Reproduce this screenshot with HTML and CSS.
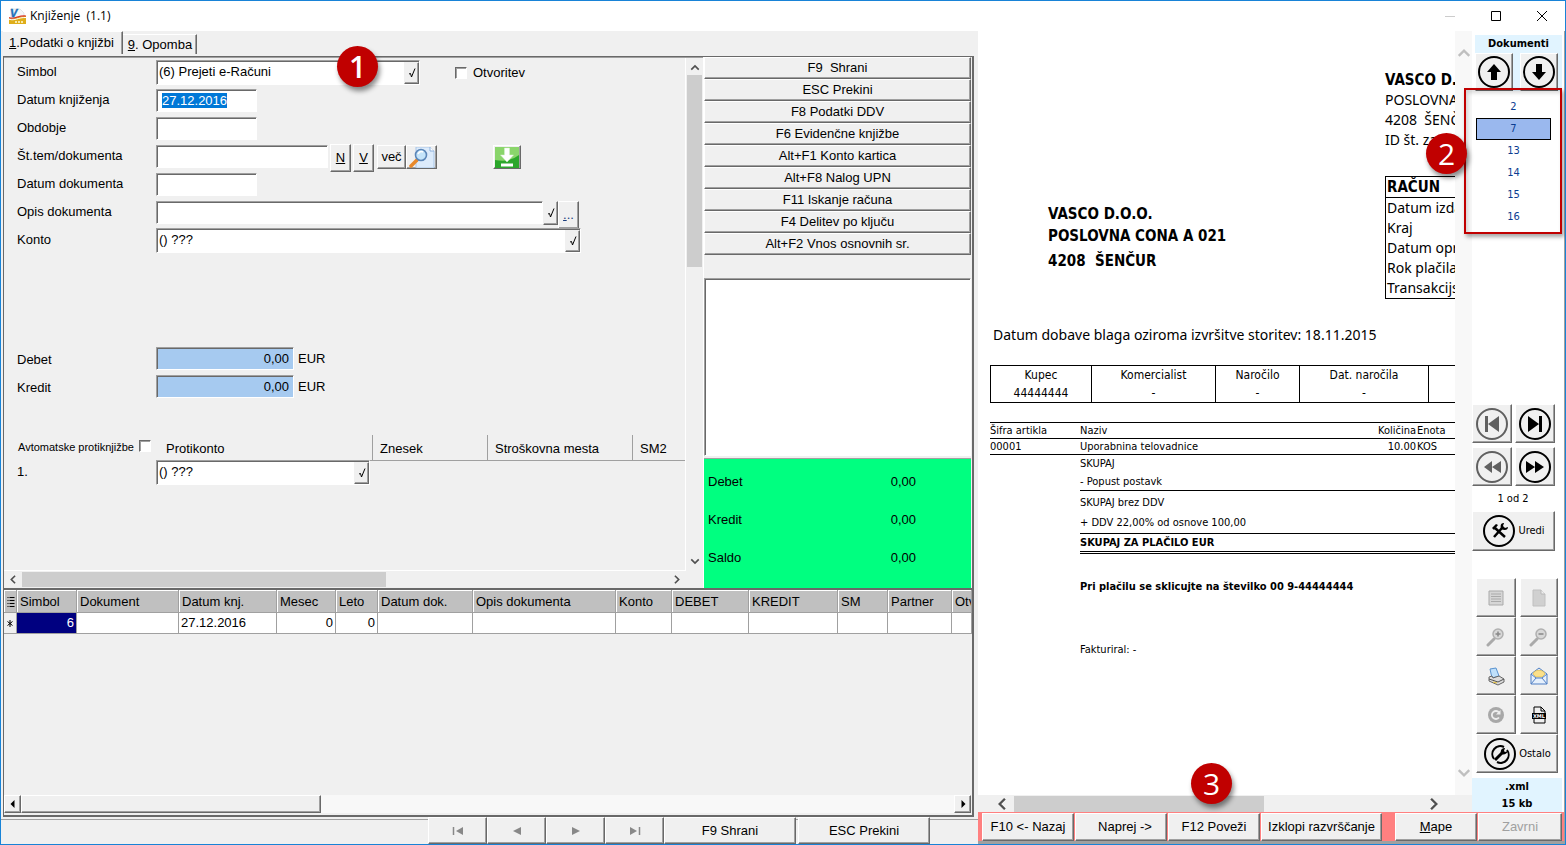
FILE: index.html
```html
<!DOCTYPE html>
<html lang="sl">
<head>
<meta charset="utf-8">
<title>Knjiženje (1.1)</title>
<link rel="stylesheet" href="styles.css">
</head>
<body>
<svg class="defs" aria-hidden="true">
  <symbol id="tick" viewBox="0 0 10 12"><path d="M2 7l1.500-.5 1 3.500L8 1.500" fill="none" stroke="#000"/></symbol>
  <symbol id="chev" viewBox="0 0 12 8"><path d="M1.500 6.500L6 2l4.500 4.500" fill="none" stroke="currentColor" stroke-width="2"/></symbol>
  <symbol id="glass" viewBox="0 0 20 20"><path d="M2 18l6-6" stroke="#aaa" stroke-width="3" stroke-linecap="round"/><circle cx="12" cy="7" r="5" fill="#d8d8d8" stroke="#b0b0b0" stroke-width="1.500"/></symbol>
</svg>
<div class="window">
  <header class="titlebar">
    <svg class="app-icon" viewBox="0 0 17 17"><path d="M2 1h9l4 4v9H2z" fill="#f4f6f8" stroke="#cfd6dc" stroke-width=".6"/><path d="M0 10c5 2 8-2 17-2v8H0z" fill="#dfae1a"/><path d="M0 9.500c6 2.500 9-2.500 17-1.500" fill="none" stroke="#d9352b" stroke-width="1.200"/><path d="M0 11.200c6 2 9-2 17-1.700" fill="none" stroke="#fff" stroke-width="1"/><path d="M6 14h9" stroke="#f8e9a8" stroke-width="2" stroke-dasharray="2 1"/><text x="1" y="9" class="logo-v">V</text></svg>
    <h1>Knjiženje&nbsp; (1.1)</h1>
    <div class="win-buttons">
      <button type="button" aria-label="Minimiraj" disabled><svg viewBox="0 0 12 12"><path d="M1 6.500h10" stroke="#ccc"/></svg></button>
      <button type="button" aria-label="Povečaj"><svg viewBox="0 0 12 12"><path d="M1.500 1.500h9v9h-9z" fill="none" stroke="#000"/></svg></button>
      <button type="button" aria-label="Zapri"><svg viewBox="0 0 12 12"><path d="M1 1l10 10M11 1L1 11" fill="none" stroke="#000"/></svg></button>
    </div>
  </header>
  <div class="body">
    <main class="ledger">
      <nav class="tabs">
        <button type="button" class="tab active"><u>1</u>.Podatki o knjižbi</button>
        <button type="button" class="tab"><u>9</u>. Opomba</button>
      </nav>
      <section class="panel">
        <div class="upper">
          <div class="form-view">
            <form class="form">
              <div class="row"><label for="simbol">Simbol</label><span class="combo c-simbol"><input id="simbol" value="(6) Prejeti e-Računi"><button type="button" class="pick" aria-label="Izberi simbol"><svg><use href="#tick"/></svg></button></span><label class="check"><input type="checkbox">Otvoritev</label></div>
              <div class="row"><label for="dknj">Datum knjiženja</label><input id="dknj" class="field short" value="27.12.2016"></div>
              <div class="row"><label for="obd">Obdobje</label><input id="obd" class="field short"></div>
              <div class="row"><label for="stdok">Št.tem/dokumenta</label><input id="stdok" class="field medium">
                <div class="tools"><button type="button" class="btn tall"><u>N</u></button><button type="button" class="btn tall"><u>V</u></button>
                <div class="pair"><button type="button" class="btn more">več</button><button type="button" class="btn look" aria-label="Poišči"><svg viewBox="0 0 28 21"><path d="M8 0h14l4 4v17H8z" fill="#dcebfb" stroke="#a9c6e8"/><path d="M22 0v4h4" fill="#fff" stroke="#8cb0dc"/><path d="M3 19l6-6" stroke="#e8892b" stroke-width="3.500" stroke-linecap="round"/><circle cx="13" cy="8" r="5.500" fill="#c4e4fa" stroke="#5b86b8" stroke-width="1.600"/><path d="M10 7c1-2 3-3 5-2" fill="none" stroke="#fff" stroke-width="1.500"/></svg></button></div></div>
                <button type="button" class="btn import" aria-label="Uvozi"><svg viewBox="0 0 24 21"><rect width="24" height="21" fill="#2ca72c"/><path d="M0 0h24v8Q14 16 0 13z" fill="#8ad56b"/><path d="M9.500 1h5v7h4L12 15 5.500 8h4z" fill="#fff" stroke="#d9f2d2" stroke-width=".5"/><path d="M6 16.500h12v3H6z" fill="#fff"/></svg></button></div>
              <div class="row"><label for="ddok">Datum dokumenta</label><input id="ddok" class="field short"></div>
              <div class="row"><label for="opis">Opis dokumenta</label><input id="opis" class="field long"><button type="button" class="pick outside" aria-label="Izberi opis"><svg><use href="#tick"/></svg></button><button type="button" class="btn dots"><u>.</u>..</button></div>
              <div class="row"><label for="konto">Konto</label><span class="combo c-konto"><input id="konto" value="() ???"><button type="button" class="pick" aria-label="Izberi konto"><svg><use href="#tick"/></svg></button></span></div>
              <div class="sums">
                <div class="row"><label for="debet">Debet</label><input id="debet" class="field amount" value="0,00"><span class="unit">EUR</span></div>
                <div class="row"><label for="kredit">Kredit</label><input id="kredit" class="field amount" value="0,00"><span class="unit">EUR</span></div>
              </div>
              <div class="contra">
                <label class="auto">Avtomatske protiknjižbe<input type="checkbox"></label>
                <div class="contra-head"><span>Protikonto</span><span>Znesek</span><span>Stroškovna mesta</span><span>SM2</span></div>
              </div>
              <div class="row"><label for="pk1">1.</label><span class="combo c-contra"><input id="pk1" value="() ???"><button type="button" class="pick" aria-label="Izberi protikonto"><svg><use href="#tick"/></svg></button></span></div>
            </form>
            <div class="vscroll"><svg><use href="#chev"/></svg><i></i><svg class="down"><use href="#chev"/></svg></div>
            <div class="hscroll"><svg class="left"><use href="#chev"/></svg><i></i><svg class="right"><use href="#chev"/></svg></div>
          </div>
          <aside class="actions">
            <div class="action-list">
              <button type="button" class="btn">F9&nbsp; Shrani</button>
              <button type="button" class="btn">ESC Prekini</button>
              <button type="button" class="btn">F8 Podatki DDV</button>
              <button type="button" class="btn">F6 Evidenčne knjižbe</button>
              <button type="button" class="btn">Alt+F1 Konto kartica</button>
              <button type="button" class="btn">Alt+F8 Nalog UPN</button>
              <button type="button" class="btn">F11 Iskanje računa</button>
              <button type="button" class="btn">F4 Delitev po ključu</button>
              <button type="button" class="btn">Alt+F2 Vnos osnovnih sr.</button>
            </div>
            <textarea class="memo" aria-label="Sporočila"></textarea>
            <dl class="balance">
              <div><dt>Debet</dt><dd>0,00</dd></div>
              <div><dt>Kredit</dt><dd>0,00</dd></div>
              <div><dt>Saldo</dt><dd>0,00</dd></div>
            </dl>
          </aside>
        </div>
        <div class="grid-view">
          <table class="entries">
            <colgroup><col class="w-ind"><col class="w-sim"><col class="w-dok"><col class="w-dat"><col class="w-mes"><col class="w-let"><col class="w-dd"><col class="w-opi"><col class="w-kon"><col class="w-deb"><col class="w-kre"><col class="w-sm"><col class="w-par"><col></colgroup>
            <thead><tr><th><svg class="ind" viewBox="0 0 7 11"><path d="M0 .5h1M2 .5h5M0 3.500h1M2 3.500h5M0 6.500h1M2 6.500h5M0 9.500h1M2 9.500h5" stroke="#000"/></svg></th><th>Simbol</th><th>Dokument</th><th>Datum knj.</th><th>Mesec</th><th>Leto</th><th>Datum dok.</th><th>Opis dokumenta</th><th>Konto</th><th>DEBET</th><th>KREDIT</th><th>SM</th><th>Partner</th><th>Otv</th></tr></thead>
            <tbody><tr><td class="mark"><svg class="ind" viewBox="0 0 7 11"><path d="M3.500 2v7M1 3.500l5 4M6 3.500l-5 4" stroke="#000"/></svg></td><td class="num sel">6</td><td></td><td>27.12.2016</td><td class="num">0</td><td class="num">0</td><td></td><td></td><td></td><td></td><td></td><td></td><td></td><td></td></tr></tbody>
          </table>
          <div class="classic-scroll"><button type="button" class="btn" aria-label="Levo"><svg viewBox="0 0 8 8"><path d="M5.500 0v8L1.500 4z"/></svg></button><i class="btn"></i><button type="button" class="btn end" aria-label="Desno"><svg viewBox="0 0 8 8"><path d="M2.500 0v8l4-4z"/></svg></button></div>
        </div>
      </section>
      <footer class="navbar">
        <button type="button" class="btn nav" aria-label="Prvi"><svg viewBox="0 0 12 10"><path d="M1.500 1v8" stroke="#888" stroke-width="1.500"/><path d="M11 1v8L4 5z" fill="#888"/></svg></button><button type="button" class="btn nav" aria-label="Prejšnji"><svg viewBox="0 0 12 10"><path d="M10 1v8L2 5z" fill="#888"/></svg></button><button type="button" class="btn nav" aria-label="Naslednji"><svg viewBox="0 0 12 10"><path d="M2 1v8l8-4z" fill="#888"/></svg></button><button type="button" class="btn nav" aria-label="Zadnji"><svg viewBox="0 0 12 10"><path d="M10.500 1v8" stroke="#888" stroke-width="1.500"/><path d="M1 1v8l7-4z" fill="#888"/></svg></button><button type="button" class="btn wide">F9 Shrani</button><button type="button" class="btn wide">ESC Prekini</button>
      </footer>
      <span class="badge one">1</span>
    </main>
    <section class="viewer">
      <div class="viewer-main">
        <div class="page">
          <article class="invoice">
            <div class="inv-head">
              <address class="recipient"><p>VASCO D.O.O.</p><p>POSLOVNA CONA A 021</p><p class="post">4208&nbsp; ŠENČUR</p></address>
              <div class="vendor">
                <p class="name">VASCO D.O.O.</p><p>POSLOVNA CONA A 021</p><p>4208&nbsp; ŠENČUR</p><p>ID št. za DDV:</p>
                <div class="facts"><h2>RAČUN</h2><p>Datum izdaje</p><p>Kraj</p><p>Datum opravljene st.</p><p>Rok plačila</p><p>Transakcijski račun</p></div>
              </div>
            </div>
            <p class="supply">Datum dobave blaga oziroma izvršitve storitev: 18.11.2015</p>
            <table class="order"><colgroup><col class="o1"><col class="o2"><col class="o3"><col class="o4"><col></colgroup>
              <tbody><tr><td>Kupec<br>44444444</td><td>Komercialist<br>-</td><td>Naročilo<br>-</td><td>Dat. naročila<br>-</td><td></td></tr></tbody></table>
            <table class="items"><colgroup><col class="i1"><col class="i2"><col class="i3"><col></colgroup>
              <thead><tr><th>Šifra artikla</th><th>Naziv</th><th class="r">Količina</th><th>Enota</th></tr></thead>
              <tbody><tr><td>00001</td><td>Uporabnina telovadnice</td><td class="r">10.00</td><td>KOS</td></tr></tbody></table>
            <div class="totals">
              <p class="t1">SKUPAJ</p><p class="t2">- Popust postavk</p><p class="t3">SKUPAJ brez DDV</p><p class="t4">+ DDV 22,00% od osnove 100,00</p><p class="t5">SKUPAJ ZA PLAČILO EUR</p>
              <p class="ref">Pri plačilu se sklicujte na številko 00 9-44444444</p>
              <p class="by">Fakturiral: -</p>
            </div>
          </article>
        </div>
        <div class="doc-vscroll"><svg><use href="#chev"/></svg><svg class="down"><use href="#chev"/></svg></div>
        <div class="doc-hscroll"><svg class="left"><use href="#chev"/></svg><i></i><svg class="right"><use href="#chev"/></svg></div>
        <aside class="side">
          <div class="docs-head"><h2>Dokumenti</h2><div class="two">
            <button type="button" class="btn rnd" aria-label="Prejšnji dokument"><svg viewBox="0 0 34 34"><circle cx="17" cy="17" r="15" fill="none" stroke="#000" stroke-width="2"/><path d="M17 9l7 8h-4v8h-6v-8h-4z"/></svg></button>
            <button type="button" class="btn rnd" aria-label="Naslednji dokument"><svg viewBox="0 0 34 34"><circle cx="17" cy="17" r="15" fill="none" stroke="#000" stroke-width="2"/><path d="M17 25l7-8h-4V9h-6v8h-4z"/></svg></button></div></div>
          <div class="doc-list"><button type="button">2</button><button type="button" class="current">7</button><button type="button">13</button><button type="button">14</button><button type="button">15</button><button type="button">16</button></div>
          <div class="pager">
            <button type="button" class="btn rnd dim" aria-label="Prva stran"><svg viewBox="0 0 34 34"><circle cx="17" cy="17" r="15" fill="none" stroke="#606060" stroke-width="2"/><path d="M10 9h3v16h-3zM24 9v16l-11-8z" fill="#606060"/></svg></button>
            <button type="button" class="btn rnd" aria-label="Zadnja stran"><svg viewBox="0 0 34 34"><circle cx="17" cy="17" r="15" fill="none" stroke="#000" stroke-width="2"/><path d="M21 9h3v16h-3zM10 9v16l11-8z"/></svg></button>
            <button type="button" class="btn rnd dim" aria-label="Stran nazaj"><svg viewBox="0 0 34 34"><circle cx="17" cy="17" r="15" fill="none" stroke="#606060" stroke-width="2"/><path d="M17 11v12l-8-6zM26 11v12l-9-6z" fill="#606060"/></svg></button>
            <button type="button" class="btn rnd" aria-label="Stran naprej"><svg viewBox="0 0 34 34"><circle cx="17" cy="17" r="15" fill="none" stroke="#000" stroke-width="2"/><path d="M8 11v12l9-6zM17 11v12l9-6z"/></svg></button>
          </div>
          <p class="count">1 od 2</p>
          <button type="button" class="btn edit"><svg viewBox="0 0 34 34"><circle cx="17" cy="17" r="15" fill="none" stroke="#000" stroke-width="2"/><path d="M12 23L20 14M13 14l10 9" stroke="#000" stroke-width="2.500"/><path d="M10 14l4-4 2 1-4 5zM19 15c-1-4 0-6 3-6l-1 3 2 2 3-1c0 3-3 4-7 2z"/></svg>Uredi</button>
          <div class="tool-grid">
            <button type="button" class="btn" aria-label="Cela stran"><svg viewBox="0 0 20 20"><path d="M3 3h14v14H3z" fill="#d6d6d6" stroke="#aaa"/><path d="M5 6h10M5 8.500h10M5 11h10M5 13.500h10" stroke="#aaa"/></svg></button>
            <button type="button" class="btn" aria-label="Nova stran"><svg viewBox="0 0 20 20"><path d="M4 2h8l4 4v12H4z" fill="#d0d0d0" stroke="#c0c0c0"/><path d="M12 2v4h4" fill="#eee" stroke="#b8b8b8"/></svg></button>
            <button type="button" class="btn" aria-label="Povečaj pogled"><svg viewBox="0 0 20 20"><use href="#glass"/><path d="M9.500 7h5M12 4.500v5" stroke="#888" stroke-width="1.500"/></svg></button>
            <button type="button" class="btn" aria-label="Pomanjšaj pogled"><svg viewBox="0 0 20 20"><use href="#glass"/><path d="M9.500 7h5" stroke="#888" stroke-width="1.500"/></svg></button>
            <button type="button" class="btn" aria-label="Natisni"><svg viewBox="0 0 20 20"><path d="M4 3l6-1 3 8-7 2z" fill="#bfe0fb" stroke="#5a93d0"/><path d="M3 11l3-1 1 2 6-2 5 3v3l-6 3-9-4z" fill="#dcdcdc" stroke="#666"/><path d="M3 13l9 3 6-3" fill="none" stroke="#555"/><path d="M7 16l4 1" stroke="#e8c23a" fill="none"/></svg></button>
            <button type="button" class="btn" aria-label="Pošlji"><svg viewBox="0 0 20 20"><path d="M2 8l8-6 8 6v10H2z" fill="#e6f0fc" stroke="#4f7fc4"/><path d="M4 8c1-5 11-5 12 0l-3 3H7z" fill="#fbe08a" stroke="#d9b64a" stroke-width=".7"/><path d="M2 8l5 4h6l5-4M2 18l5-6M18 18l-5-6" fill="none" stroke="#4f7fc4"/></svg></button>
            <button type="button" class="btn" aria-label="Osveži"><svg viewBox="0 0 20 20"><circle cx="10" cy="10" r="8" fill="#a8a8a8"/><path d="M13 12.500a4 4 0 1 1 0-5" fill="none" stroke="#eee" stroke-width="1.800"/><path d="M14.500 5v4.500H10z" fill="#eee"/></svg></button>
            <button type="button" class="btn" aria-label="Izvozi"><svg viewBox="0 0 20 20"><path d="M5 8V2h7l4 4v2M5 14v4h11v-4" fill="none" stroke="#000"/><path d="M12 2v4h4" fill="none" stroke="#000"/><path d="M3 8h14v6H3z"/><text x="4" y="13" class="xml-tag">XML</text></svg></button>
            <button type="button" class="btn other"><svg viewBox="0 0 34 34"><circle cx="17" cy="17" r="15" fill="none" stroke="#000" stroke-width="2"/><path d="M11 22A8 8 0 0 1 21 10M24 13A8 8 0 0 1 14 25" fill="none" stroke="#000" stroke-width="2"/><path d="M12 23l8-8" stroke="#000" stroke-width="3"/><path d="M18 17c-1-4 1-6 4-6l-1 3 1 1 3-1c-1 3-4 4-7 3z"/></svg>Ostalo</button>
          </div>
          <div class="file-info"><span>.xml</span><span>15 kb</span></div>
          <div class="marker"></div>
        </aside>
      </div>
      <div class="link-bar"><button type="button" class="btn">F10 &lt;- Nazaj</button><button type="button" class="btn indent">Naprej -&gt;</button><button type="button" class="btn">F12 Poveži</button><button type="button" class="btn b-sort">Izklopi razvrščanje</button><button type="button" class="btn b-maps"><u>M</u>ape</button><button type="button" class="btn b-reject" disabled>Zavrni</button></div>
      <span class="badge two-mark">2</span>
      <span class="badge three">3</span>
    </section>
  </div>
</div>
<script src="script.js"></script>
</body>
</html>
```

FILE: styles.css
```css
* { box-sizing: border-box; }
body { margin: 0; font: 13px/16px "Liberation Sans", Arial, sans-serif; color: #000; background: #f0f0f0; }
button, input, textarea { font: inherit; color: inherit; margin: 0; padding: 0; border-radius: 0; }
button { background: none; border: 0; white-space: nowrap; }
h1, h2, p, dl, dd { margin: 0; }
svg { display: block; flex: none; }
.defs { position: absolute; width: 0; height: 0; }
.window { display: flex; flex-direction: column; height: 100vh; min-height: 700px; border: 1px solid #1883d7; overflow: hidden; }

.titlebar { display: flex; align-items: center; flex: 0 0 30px; padding-left: 8px; background: #fff; }
.app-icon { width: 17px; height: 17px; }
.logo-v { font: italic bold 11px "Liberation Sans", sans-serif; fill: #1c6fb8; stroke: #1c6fb8; stroke-width: .4px; }
.titlebar h1 { margin-left: 4px; font: 12px/16px "Open Sans", sans-serif; }
.win-buttons { display: flex; margin-left: auto; }
.win-buttons button { display: grid; place-items: center; width: 46px; height: 28px; }
.win-buttons svg { width: 12px; height: 12px; }

.body { display: flex; flex: 1; min-height: 0; }
.ledger { position: relative; display: flex; flex-direction: column; flex: 1; min-width: 0; background: #f0f0f0; }

.btn { display: flex; align-items: center; justify-content: center; background: #f0f0f0; border: 1px solid; border-color: #fff #696969 #696969 #fff; box-shadow: inset -1px -1px #a0a0a0; }
.tabs { display: flex; align-items: flex-end; height: 25px; padding: 0 0 2px 2px; }
.tab { height: 20px; padding: 0 4px 0 5px; border-top: 1px solid #fff; border-right: 1px solid #696969; box-shadow: inset -1px 0 #a0a0a0; }
.tab.active { height: 23px; padding: 0 8px 0 6px; }

.panel { display: flex; flex-direction: column; flex: 1; min-height: 0; margin: 0 4px 0 2px; border: 1px solid #696969; border-width: 1px 2px 2px 1px; }
.upper { display: grid; grid-template-columns: minmax(0, 1fr) 269px; border-bottom: 2px solid #696969; }
.form-view { display: grid; grid-template: minmax(0, 1fr) 17px / minmax(0, 1fr) 17px; border-top: 1px solid #a0a0a0; }
.form { padding: 3px 0 0; border-right: 1px solid #fff; border-bottom: 1px solid #fff; overflow: hidden; }
.row { display: flex; height: 28px; padding-left: 13px; }
.row > label:first-child { flex: 0 0 139px; padding-top: 3px; }
.field, .combo { height: 23px; background: #fff; border: 1px solid; border-color: #a0a0a0 #fff #fff #a0a0a0; box-shadow: inset 1px 1px #696969; padding: 0 5px; outline: 0; }
.field { caret-color: transparent; }
.field::selection { background: #0078d7; color: #fff; }
.short { width: 101px; }
.medium { width: 172px; }
.long { width: 387px; }
.amount { width: 138px; background: #a6caf0; text-align: right; padding-right: 4px; }
.combo { display: flex; height: 25px; padding: 1px 0 0 2px; margin-top: -1px; }
.combo input { flex: 1; min-width: 0; border: 0; outline: 0; background: none; padding-bottom: 3px; }
.c-simbol { width: 264px; }
.c-konto { width: 425px; }
.c-contra { width: 214px; }
.pick { display: grid; place-items: center; width: 15px; background: #f0f0f0; border: 1px solid; border-color: #f0f0f0 #696969 #696969 #f0f0f0; box-shadow: inset -1px -1px #a0a0a0; }
.pick svg { width: 10px; height: 12px; }
.pick.outside { height: 24px; }
.check { display: flex; gap: 6px; align-items: center; height: 24px; margin-left: 35px; }
.form input[type="checkbox"] { appearance: none; width: 12px; height: 12px; background: #fff; border: 1px solid; border-color: #696969 #fff #fff #696969; box-shadow: inset 1px 1px #a0a0a0; }
.tools { display: flex; gap: 2px; margin-left: 2px; }
.tools .tall { width: 21px; height: 28px; margin-top: -1px; }
.pair { display: flex; height: 24px; margin-left: 1px; }
.more { width: 29px; }
.look { width: 31px; }
.look svg { width: 28px; height: 21px; }
.import { width: 28px; height: 24px; margin-left: 56px; }
.import svg { width: 24px; height: 21px; }
.dots { width: 21px; height: 28px; color: #1a3c7c; }
.unit { padding: 4px 4px; }
.sums { padding: 90px 0 32px; }
.sums label { padding-top: 5px !important; }
.contra { display: flex; height: 26px; }
.auto { display: flex; justify-content: space-between; flex: 0 0 152px; padding: 5px 5px 0 14px; font-size: 11px; line-height: 14px; }
.contra-head { display: flex; flex: 1; min-width: 0; border-bottom: 1px solid #a0a0a0; }
.contra-head span { padding: 6px 7px 0; border-right: 1px solid #a0a0a0; }
.contra-head span:nth-child(1) { width: 217px; padding-left: 10px; }
.contra-head span:nth-child(2) { width: 115px; }
.contra-head span:nth-child(3) { width: 145px; }
.contra-head span:nth-child(4) { flex: 1; border: 0; }

.vscroll { display: flex; flex-direction: column; align-items: center; padding: 6px 0; color: #505050; }
.vscroll svg, .hscroll svg { width: 10px; height: 7px; }
.vscroll i { width: 15px; height: 192px; margin-top: 4px; background: #cdcdcd; }
.vscroll .down { margin-top: auto; transform: rotate(180deg); }
.hscroll { display: flex; align-items: center; padding: 0 4px; color: #505050; }
.hscroll i { flex: 0 0 54%; height: 15px; margin-left: 4px; background: #cdcdcd; }
.left { transform: rotate(-90deg); }
.right { margin-left: auto; transform: rotate(90deg); }

.actions { display: flex; flex-direction: column; padding-right: 1px; border-left: 1px solid #fff; }
.action-list .btn { width: 100%; height: 22px; }
.memo { display: block; height: 178px; margin-top: 23px; resize: none; background: #fff; border: 1px solid; border-color: #a0a0a0 #fff #fff #a0a0a0; box-shadow: inset 1px 1px #696969; outline: 0; }
.balance { margin-top: 2px; padding: 4px 0 11px; background: #00ff80; border-top: 1px solid #a0a0a0; }
.balance div { display: flex; align-items: center; height: 38px; padding: 0 55px 0 4px; }
.balance dd { margin-left: auto; }

.grid-view { display: flex; flex-direction: column; flex: 1; min-height: 0; }
.entries { width: 100%; table-layout: fixed; border-collapse: separate; border-spacing: 0; }
.entries th, .entries td { height: 21px; padding: 0 2px; overflow: hidden; white-space: nowrap; text-align: left; font-weight: 400; border-right: 1px solid #a0a0a0; border-bottom: 1px solid #a0a0a0; }
.entries th { height: 23px; padding: 2px 1px 0 3px; background: #c0c0c0; box-shadow: inset 1px 1px #fff; }
.entries td { background: #fff; }
.entries .num { text-align: right; }
.entries .sel { background: #000080; color: #fff; }
.entries .mark { background: #f0f0f0; }
.ind { width: 8px; height: 11px; }
.w-ind { width: 13px; } .w-sim { width: 60px; } .w-dok { width: 102px; } .w-dat { width: 98px; } .w-mes { width: 59px; } .w-let { width: 42px; } .w-dd { width: 95px; } .w-opi { width: 143px; } .w-kon { width: 56px; } .w-deb { width: 77px; } .w-kre { width: 89px; } .w-sm { width: 50px; } .w-par { width: 64px; }
.classic-scroll { display: flex; height: 18px; margin: auto 1px 2px 0; background: #f8f8f8; }
.classic-scroll .btn { width: 17px; }
.classic-scroll i.btn { width: 31%; }
.classic-scroll .end { margin-left: auto; }
.classic-scroll svg { width: 8px; height: 8px; }

.navbar { display: flex; flex: 0 0 27px; padding-left: 427px; background: linear-gradient(#a0a0a0, #a0a0a0) 0 2px / 100% 1px no-repeat; }
.navbar .nav { width: 59px; }
.navbar svg { width: 12px; height: 10px; }
.navbar .wide { width: 132px; }
.navbar .wide + .wide { margin-left: 2px; }

.viewer { position: relative; display: flex; flex-direction: column; flex: 0 0 587px; border-right: 1px solid #a0a0a0; border-bottom: 3px solid #a0a0a0; font-family: "DejaVu Sans Condensed", "DejaVu Sans", sans-serif; font-stretch: condensed; }
.viewer-main { display: grid; grid-template: minmax(0, 1fr) 17px / minmax(0, 1fr) 17px 92px; flex: 1; min-height: 0; background: #fff; }
.page { overflow: hidden; }
.invoice { width: 780px; padding: 39px 0 0 12px; font-size: 11px; line-height: 16px; }
.inv-head { display: grid; grid-template-columns: 395px 1fr; line-height: 20px; }
.recipient { padding: 133px 0 0 58px; font-size: 15px; font-style: normal; font-weight: 700; line-height: 22px; }
.post { margin-top: 3px; }
.vendor, .supply { font-family: "Noto Sans", sans-serif; font-stretch: normal; font-size: 14px; }
.vendor .name, .facts h2 { font: bold 15px/20px "DejaVu Sans Condensed", "DejaVu Sans", sans-serif; font-stretch: condensed; }
.facts { margin-top: 26px; border: 1px solid #000; }
.facts h2 { border-bottom: 1px solid #000; }
.facts h2, .facts p { padding-left: 1px; }
.supply { margin: 26px 0 20px 3px; line-height: 20px; }
.order, .items { width: 100%; table-layout: fixed; border-collapse: collapse; }
.order { font-size: 12px; line-height: 18px; text-align: center; }
.order td { height: 37px; padding: 0; border: 1px solid #000; vertical-align: top; }
.o1 { width: 101px; } .o2 { width: 124px; } .o3 { width: 84px; } .o4 { width: 129px; }
.items { margin-top: 19px; }
.items th, .items td { height: 16px; padding: 0; line-height: 15px; font-weight: 400; text-align: left; border: solid #000; border-width: 1px 0; }
.items .r { padding-right: 1px; text-align: right; }
.i1 { width: 90px; } .i2 { width: 236px; } .i3 { width: 101px; }
.totals { margin-left: 90px; }
.t1 { padding-top: 1px; }
.t2 { padding-top: 2px; border-bottom: 1px solid #000; }
.t3 { padding: 4px 0; }
.t4 { padding-bottom: 2px; border-bottom: 1px solid #000; }
.t5 { height: 20px; padding-top: 1px; border-bottom: 3px double #000; font-weight: 700; }
.ref { margin-top: 25px; font-weight: 700; }
.by { margin-top: 47px; }

.doc-vscroll { display: flex; flex-direction: column; align-items: center; justify-content: space-between; padding: 17px 0; background: #f8f8f8; color: #bfbfbf; }
.doc-vscroll svg, .doc-hscroll svg { width: 14px; height: 10px; }
.doc-vscroll .down { transform: rotate(180deg); }
.doc-hscroll { grid-row: 2; grid-column: 1 / 3; display: flex; align-items: center; padding: 0 31px 0 17px; background: #f0f0f0; color: #505050; }
.doc-hscroll i { width: 250px; height: 16px; margin-left: 5px; background: #cdcdcd; }

.side { position: relative; grid-row: 1 / 3; grid-column: 3; display: flex; flex-direction: column; padding: 4px 2px 0 0; font-size: 11px; }
.docs-head { margin-left: 3px; background: #e1f4ff; }
.docs-head h2 { font-size: 11px; line-height: 18px; text-align: center; }
.two { display: flex; gap: 7px; }
.rnd { width: 38px; height: 38px; }
.rnd svg, .edit svg, .other svg { width: 34px; height: 34px; }
.doc-list { display: flex; flex-direction: column; margin: 5px 11px 0 4px; }
.doc-list button { height: 22px; color: #0b3d91; font-size: 11px; }
.doc-list .current { background: #9ab8ee; border: 1px solid #000; }
.pager { display: grid; grid-template-columns: 40px 40px; gap: 4px 3px; margin-top: auto; }
.pager .btn { width: 40px; height: 39px; }
.count { margin: 5px 8px 4px 0; text-align: center; }
.edit { width: 83px; height: 40px; gap: 2px; }
.tool-grid { display: grid; grid-template-columns: 40px 38px; column-gap: 4px; grid-auto-rows: 39px; margin: 27px 0 5px 4px; }
.tool-grid svg { width: 20px; height: 20px; }
.tool-grid .other { grid-column: 1 / 3; gap: 2px; }
.tool-grid .other svg { width: 34px; height: 34px; }
.xml-tag { font: bold 5px "DejaVu Sans", sans-serif; fill: #fff; }
.file-info { display: flex; flex-direction: column; background: #e1f4ff; font-weight: 700; line-height: 17px; text-align: center; }
.marker { position: absolute; left: -8px; top: 57px; width: 98px; height: 146px; border: 2px solid #c00000; box-shadow: 2px 3px 4px rgba(0, 0, 0, .35), inset 2px 3px 4px rgba(0, 0, 0, .15); pointer-events: none; }

.link-bar { display: flex; flex: 0 0 29px; gap: 1px; padding: 1px 2px 0 4px; background: #ff8080; font-family: "Liberation Sans", Arial, sans-serif; font-stretch: normal; }
.link-bar .btn { flex: 0 0 92px; }
.link-bar .indent { padding-left: 8px; }
.link-bar .b-sort { flex-basis: 121px; }
.link-bar .b-maps { flex-basis: 82px; margin-left: auto; }
.link-bar .b-reject { flex-basis: 84px; color: #a0a0a0; }

.badge { position: absolute; display: grid; place-items: center; width: 41px; height: 41px; border-radius: 50%; background: #c00000; color: #fff; font: 600 30px/41px "Open Sans", sans-serif; box-shadow: 2px 4px 5px rgba(0, 0, 0, .45); }
.one { left: 336px; top: 15px; }
.two-mark { left: 448px; top: 102px; font-weight: 500; }
.three { left: 213px; bottom: 37px; font-weight: 500; }
```

FILE: script.js
```js
const entryDate = document.getElementById('dknj');
entryDate.focus();
entryDate.select();
```
